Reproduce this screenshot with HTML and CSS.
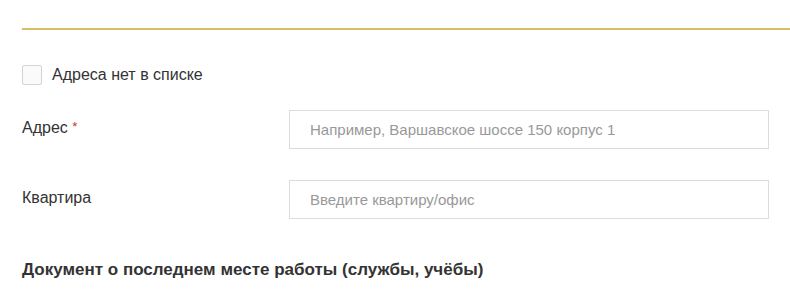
FILE: index.html
```html
<!DOCTYPE html>
<html lang="ru">

    <head>
        <meta charset="UTF-8">
        <meta name="viewport" content="width=device-width, initial-scale=1.0">
        <title>Адрес</title>
        <link rel="stylesheet" href="styles.css">
    </head>

    <body>
        <div class="form">
            <div class="divider"></div>

            <label class="check">
                <span class="box"></span>
                <span>Адреса нет в списке</span>
            </label>

            <div class="row">
                <div class="label">Адрес <span class="req">*</span></div>
                <input class="field" type="text" placeholder="Например, Варшавское шоссе 150 корпус 1">
            </div>

            <div class="row">
                <div class="label">Квартира</div>
                <input class="field" type="text" placeholder="Введите квартиру/офис">
            </div>

            <h2 class="section">Документ о последнем месте работы (службы, учёбы)</h2>
        </div>
    </body>

</html>
```

FILE: styles.css
```css
* {
    box-sizing: border-box;
    padding: 0;
    margin: 0;
}

body {
    background-color: #fff;
    font-family: "Liberation Sans", Arial, sans-serif;
    color: #333;
    overflow: hidden;
}

.form {
    padding: 28px 0 0 22px;
    display: flex;
    flex-direction: column;
}

.divider {
    height: 2px;
    background-color: #d8bd66;
}

.check {
    display: flex;
    align-items: center;
    gap: 10px;
    margin-top: 35px;
    font-size: 16px;
    line-height: 20px;
}

.box {
    width: 20px;
    height: 20px;
    border: 1px solid #d4d4d4;
    border-radius: 2px;
    background-color: #fafafa;
}

.row {
    display: grid;
    grid-template-columns: 267px 480px;
    align-items: center;
    margin-top: 25px;
}

.row + .row {
    margin-top: 31px;
}

.label {
    font-size: 16px;
    line-height: 20px;
    margin-top: -4px;
}

.req {
    color: #c0392b;
    font-size: 13px;
    vertical-align: 2px;
}

.field {
    height: 39px;
    border: 1px solid #dcdcdc;
    padding: 0 20px;
    font-family: "Liberation Sans", Arial, sans-serif;
    font-size: 15px;
    color: #333;
    outline: none;
}

.field::placeholder {
    color: #999;
}

.section {
    margin-top: 40px;
    font-size: 17px;
    font-weight: bold;
    line-height: 22px;
    color: #333;
}
```
